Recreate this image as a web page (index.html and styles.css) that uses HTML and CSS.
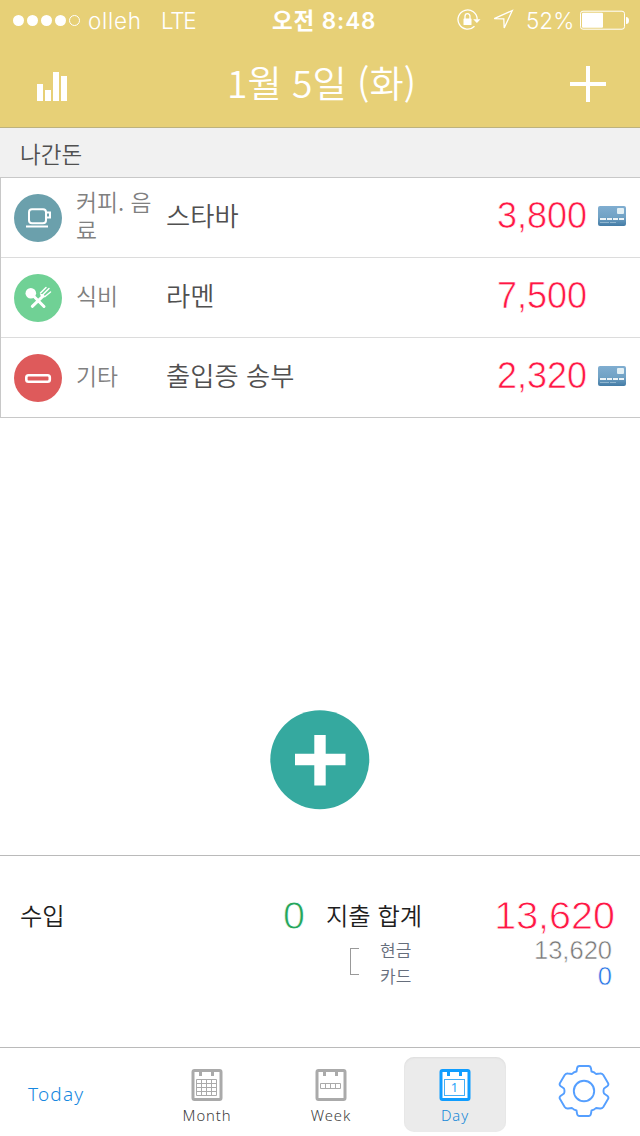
FILE: index.html
```html
<!DOCTYPE html>
<html lang="ko">
<head>
<meta charset="utf-8">
<title>1월 5일 (화)</title>
<link rel="stylesheet" href="styles.css">
</head>
<body>
<svg class="defs" width="0" height="0" aria-hidden="true">
  <defs>
    <linearGradient id="cardFill" x1="0" y1="0" x2="0" y2="1">
      <stop offset="0" stop-color="#7fadd0"/><stop offset=".55" stop-color="#71a2c5"/><stop offset="1" stop-color="#437ba5"/>
    </linearGradient>
    <symbol id="card" viewBox="0 0 28 20">
      <rect width="28" height="20" rx="2" fill="url(#cardFill)"/>
      <rect x="19" y="2" width="7" height="6" rx="1" fill="#e2eff4"/>
      <path d="M2 13h6M9 13h5M15 13h5M21 13h5" stroke="#edf4f7" stroke-width="2"/>
      <path d="M2 16.5h9M12 16.5h6" stroke="#8fb5cf" stroke-width="1"/>
    </symbol>
    <symbol id="calendar" viewBox="0 0 32 33">
      <rect x="2" y="1.500" width="28" height="29" rx="1.5" fill="#fff" stroke="currentColor" stroke-width="3"/>
      <path d="M9.5 2v5M21.500 2v5" stroke="currentColor" stroke-width="3"/>
    </symbol>
  </defs>
</svg>
<div class="app">
  <header class="top">
    <div class="status">
      <div class="signal"><i class="dot"></i><i class="dot"></i><i class="dot"></i><i class="dot"></i><i class="dot empty"></i></div>
      <span class="carrier">olleh</span>
      <span class="network">LTE</span>
      <span class="clock">오전 8:48</span>
      <svg class="lock" width="24" height="22" viewBox="0 0 24 22" fill="none" stroke="#fff" stroke-width="1.3">
        <path d="M20.200 10.400A9.600 9.600 0 1 0 17.500 17.200"/>
        <path d="M16.200 10.200h7.300L19.900 14z" fill="#fff" stroke="none"/>
        <rect x="6.500" y="9.500" width="8" height="6.500" rx=".6" fill="#fff" stroke="none"/>
        <path d="M8 10V7.500a2.500 2.800 0 0 1 5 0V10"/>
      </svg>
      <svg class="locate" width="22" height="22" viewBox="0 0 22 22" fill="none" stroke="#fff" stroke-width="1.300"><path d="M19.300 1.500 1.200 9.600l9.600.3.400 9.100z"/></svg>
      <span class="percent">52%</span>
      <svg class="battery" width="50" height="20" viewBox="0 0 50 20"><rect x=".5" y="1.200" width="44" height="18" rx="2.500" fill="none" stroke="#fff"/><rect x="2" y="2.800" width="21" height="15" rx="1" fill="#fff"/><path d="M46 7q3 0 3 3.500t-3 3.500z" fill="#fff"/></svg>
    </div>
    <div class="nav">
      <svg class="chart" width="30" height="29" viewBox="0 0 30 29" fill="#fff"><path d="M0 12h6v17H0zM8 18h6v11H8zM16 0h6v29h-6zM24 4h6v25h-6z"/></svg>
      <h1 class="title">1월 5일 (화)</h1>
      <svg class="add" width="36" height="36" viewBox="0 0 36 36"><path d="M18 0v36M0 18h36" stroke="#fff" stroke-width="4"/></svg>
    </div>
  </header>
  <h2 class="section">나간돈</h2>
  <ul class="list">
    <li class="row">
      <svg class="badge" viewBox="0 0 48 48"><circle cx="24" cy="24" r="24" fill="#6ba0ac"/><g fill="none" stroke="#fff" stroke-width="2"><rect x="15" y="15.300" width="17" height="14" rx="3"/><path d="M31.500 18.500h4.500v5h-4.500"/><path d="M12 32.500h22"/></g></svg>
      <span class="category">커피. 음료</span><span class="name">스타바</span><span class="amount">3,800</span>
      <svg class="pay"><use href="#card"/></svg>
    </li>
    <li class="row">
      <svg class="badge" viewBox="0 0 48 48"><circle cx="24" cy="24" r="24" fill="#70d195"/><circle cx="16.800" cy="19.300" r="5.300" fill="#fff"/><path d="M18 20.500l12 12M18.300 32.300 29 22.200" stroke="#fff" stroke-width="3" stroke-linecap="round" fill="none"/><path d="M26.500 19l5.500-5.500M29 20.500l6-6M31 22.500l5.500-4.500" stroke="#fff" stroke-width="1.500" stroke-linecap="round"/><path d="M26 20q1 4 5.500 3L29 20z" fill="#fff"/></svg>
      <span class="category">식비</span><span class="name">라멘</span><span class="amount">7,500</span>
      <span class="pay"></span>
    </li>
    <li class="row">
      <svg class="badge" viewBox="0 0 48 48"><circle cx="24" cy="24" r="24" fill="#de5a5b"/><rect x="12.300" y="21.200" width="23.500" height="6.500" rx="2.200" fill="none" stroke="#fff" stroke-width="2.600"/></svg>
      <span class="category">기타</span><span class="name">출입증 송부</span><span class="amount">2,320</span>
      <svg class="pay"><use href="#card"/></svg>
    </li>
  </ul>
  <main class="space">
    <svg class="fab" width="100" height="100" viewBox="0 0 100 100"><circle cx="49.800" cy="49.700" r="49.500" fill="#35a99f"/><path d="M50 25v50.500M25 49.500h50.500" stroke="#fff" stroke-width="11.400"/></svg>
  </main>
  <section class="summary">
    <span class="label">수입</span>
    <span class="income">0</span>
    <span class="label">지출 합계</span>
    <span class="total">13,620</span>
    <div class="breakdown">
      <i class="bracket"></i>
      <div class="kinds"><span>현금</span><span>카드</span></div>
      <div class="values"><span class="cash">13,620</span><span class="credit">0</span></div>
    </div>
  </section>
  <nav class="tabs">
    <span class="today">Today</span>
    <div class="tab">
      <svg class="cal" width="32" height="33" viewBox="0 0 32 33"><use href="#calendar"/><path d="M5.500 10.500h20v16h-20zM5.500 14.500h20M5.500 18.500h20M5.500 22.500h20M10.500 10.500v16M15.500 10.500v16M20.500 10.500v16" fill="none" stroke="#aaa" stroke-width="1"/></svg>
      <span>Month</span>
    </div>
    <div class="tab">
      <svg class="cal" width="32" height="33" viewBox="0 0 32 33"><use href="#calendar"/><path d="M5.500 14.500h20v5h-20zM10.500 14.500v5M15.500 14.500v5M20.500 14.500v5" fill="none" stroke="#aaa" stroke-width="1"/></svg>
      <span>Week</span>
    </div>
    <div class="tab active">
      <svg class="cal" width="32" height="33" viewBox="0 0 32 33"><use href="#calendar"/><rect x="5.500" y="10.500" width="20" height="16" fill="none" stroke="#45aef5"/><text class="day-number" x="15.500" y="23" text-anchor="middle">1</text></svg>
      <span>Day</span>
    </div>
    <svg class="gear" width="52" height="54" viewBox="-26 -27 52 54" fill="none" stroke="#559fff" stroke-width="1.900" stroke-linejoin="round">
      <circle r="10.200"/>
      <path d="M-7 -22.500Q-6.700 -25 -4.500 -25H4.500Q6.700 -25 7 -22.500L7.500 -19.500Q10.500 -18.800 12 -17L16 -17.500Q18 -17.800 19.300 -16L24 -8Q25 -6.300 23.500 -5L20 -2.500Q19 0 20 2.500L23.500 5Q25 6.300 24 8L19.300 16Q18 17.800 16 17.500L12 17Q10.500 18.800 7.500 19.500L7 22.500Q6.700 25 4.500 25H-4.500Q-6.700 25 -7 22.500L-7.500 19.500Q-10.500 18.800 -12 17L-16 17.500Q-18 17.800 -19.300 16L-24 8Q-25 6.300 -23.500 5L-20 2.500Q-19 0 -20 -2.500L-23.500 -5Q-25 -6.300 -24 -8L-19.300 -16Q-18 -17.800 -16 -17.500L-12 -17Q-10.500 -18.800 -7.500 -19.500Z"/>
    </svg>
  </nav>
</div>
</body>
</html>
```
FILE: styles.css
```css
* { box-sizing: border-box; }
body { margin: 0; background: #fff; font-family: "Noto Sans CJK KR", sans-serif; }
h1, h2, ul { margin: 0; padding: 0; font-weight: 300; list-style: none; }
svg { display: block; flex: none; }
.defs { position: absolute; }
.app { width: 640px; height: 1136px; display: flex; flex-direction: column; overflow: hidden; }

.top { height: 128px; flex: none; background: #e7d077; border-bottom: 1px solid #bdb27e; color: #fff; }
.status { height: 40px; display: flex; align-items: center; padding-left: 13px; font-family: Inter, "Noto Sans CJK KR", sans-serif; font-size: 22.5px; line-height: 41px; white-space: nowrap; }
.signal { display: flex; gap: 3px; width: 75px; padding-top: 1px; }
.dot { width: 11px; height: 11px; border-radius: 50%; background: #fff; }
.dot.empty { background: none; border: 1px solid #fff; }
.carrier { width: 73px; font-weight: 300; letter-spacing: .7px; }
.network { width: 111px; font-weight: 300; letter-spacing: -1.300px; }
.clock { width: 185px; font-weight: 600; letter-spacing: .9px; }
.lock { margin-right: 12px; }
.locate { margin-right: 11px; }
.percent { width: 54px; font-weight: 300; }
.nav { height: 87px; display: grid; grid-template-columns: 69px 1fr 70px; align-items: center; }
.chart { margin-left: 37px; margin-top: 4px; }
.title { padding-left: 4px; text-align: center; font-size: 37.200px; line-height: 84px; font-weight: 350; padding-bottom: 4px; }

.section { height: 49px; flex: none; padding-left: 20px; background: #f1f1f1; color: #505050; font-size: 22.500px; font-weight: 350; line-height: 50px; }
.list { flex: none; border-top: 1px solid #c8c8c8; border-left: 1px solid #c8c8c8; }
.row { height: 80px; display: grid; grid-template-columns: 62px 90px 1fr 120px 53px; align-items: center; padding-left: 13px; border-bottom: 1px solid #dcdcdc; }
.row:last-child { border-color: #c8c8c8; }
.badge { width: 48px; height: 48px; }
.category { width: 84px; padding-bottom: 4px; color: #808080; font-size: 22.800px; font-weight: 350; line-height: 28px; word-break: break-all; }
.name { padding-bottom: 6px; color: #505050; font-size: 26.300px; font-weight: 350; line-height: 40px; white-space: nowrap; }
.amount { padding-bottom: 4px; text-align: right; color: #ff1744; font: 36px/40px "Liberation Sans", sans-serif; -webkit-text-stroke: .6px #fff; }
.pay { width: 28px; height: 20px; margin: 0 0 3px 11px; }

.space { flex: none; height: 437px; display: flex; justify-content: center; align-items: flex-start; padding-top: 292px; }
.summary { flex: none; height: 192px; border-top: 1px solid #bababa; display: grid; grid-template-columns: 220px 86px 150px 1fr; grid-template-rows: 38px 56px; align-content: start; align-items: center; padding: 40px 25px 0 20px; }
.label { color: #1e1e1e; font-size: 24.300px; font-weight: 350; line-height: 38px; white-space: nowrap; }
.income, .total { text-align: right; font: 39.500px/38px "Liberation Sans", sans-serif; -webkit-text-stroke: .8px #fff; }
.income { padding-right: 21px; color: #26a65b; }
.total { color: #ff1744; }
.breakdown { grid-column: 1 / 5; height: 56px; display: grid; grid-template-columns: 30px 120px 1fr; padding-left: 330px; }
.bracket { width: 9px; height: 27px; margin-top: 14px; border: solid #999; border-width: 1px 0 1px 1px; }
.kinds, .values { display: flex; flex-direction: column; line-height: 26px; }
.kinds { color: #666e7c; font-size: 17px; font-weight: 350; padding-top: 3px; }
.values { padding-right: 3px; text-align: right; font-family: "Liberation Sans", sans-serif; font-size: 25.500px; -webkit-text-stroke: .5px #fff; padding-top: 3px; }
.cash { color: #777; }
.credit { color: #226fe5; }

.tabs { flex: 1; border-top: 1px solid #bababa; display: grid; grid-template-columns: 145px 124px 124px 11px 102px 1fr; padding-top: 9px; font-family: "Noto Sans", sans-serif; font-weight: 300; }
.today { padding-left: 28px; color: #1688e0; font-size: 19px; line-height: 74px; letter-spacing: 1.200px; }
.tab { height: 75px; display: flex; flex-direction: column; align-items: center; color: #404040; font-size: 14.800px; line-height: 20px; letter-spacing: .9px; padding-top: 12px; gap: 3px; }
.cal { color: #aaa; }
.tab.active { grid-column: 5; color: #1688d8; background: #ebebeb; border-radius: 10px; box-shadow: inset 0 1px 2px #ddd; }
.active .cal { color: #0f9dff; }
.day-number { fill: #2ba4f7; font: 13px "Noto Sans", sans-serif; letter-spacing: 0; }
.gear { margin: 7px 0 0 52px; }
```
